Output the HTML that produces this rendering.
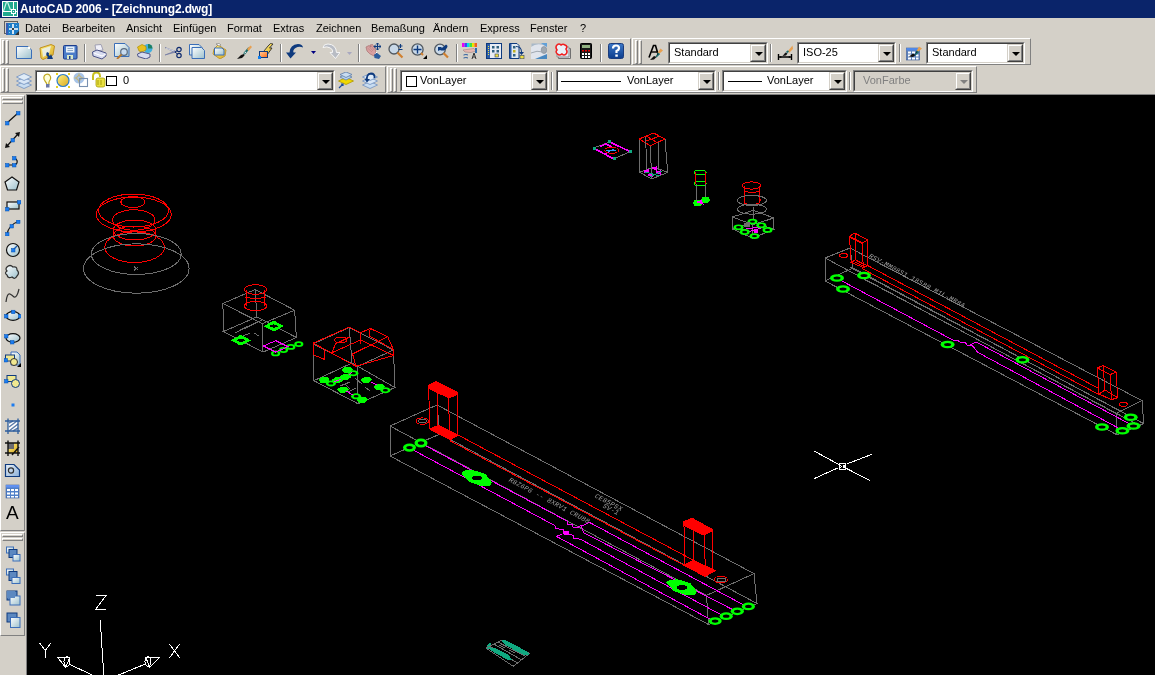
<!DOCTYPE html><html><head><meta charset="utf-8"><style>
*{margin:0;padding:0;box-sizing:border-box}
html,body{width:1155px;height:675px;overflow:hidden;background:#D4D0C8;font-family:"Liberation Sans",sans-serif;font-size:11px;color:#000;position:relative}
div,svg{position:absolute}
.t{white-space:nowrap;line-height:13px;-webkit-font-smoothing:antialiased;will-change:transform}
.tb{background:#D4D0C8;border-top:1px solid #fff;border-left:1px solid #fff;border-right:1px solid #808080;border-bottom:1px solid #808080}
.g{width:3px;border-left:1px solid #fff;border-top:1px solid #fff;border-right:1px solid #808080;border-bottom:1px solid #808080}
.hg{height:3px;border-left:1px solid #fff;border-top:1px solid #fff;border-right:1px solid #808080;border-bottom:1px solid #808080}
.sp{width:2px;height:18px;border-left:1px solid #808080;border-right:1px solid #fff}
.hsp{height:2px;width:18px;border-top:1px solid #808080;border-bottom:1px solid #fff}
.cb{background:#fff;border-top:1px solid #808080;border-left:1px solid #808080;border-right:1px solid #fff;border-bottom:1px solid #fff;height:22px}
.cb>.in{left:0;top:0;right:0;bottom:0;border-top:1px solid #404040;border-left:1px solid #404040;border-right:1px solid #D4D0C8;border-bottom:1px solid #D4D0C8}
.dd{top:1px;right:1px;width:16px;height:18px;background:#D4D0C8;border-top:1px solid #D4D0C8;border-left:1px solid #D4D0C8;border-right:1px solid #404040;border-bottom:1px solid #404040}
.dd>.i{left:0;top:0;right:0;bottom:0;border-top:1px solid #fff;border-left:1px solid #fff;border-right:1px solid #808080;border-bottom:1px solid #808080}
.dd>.i:after{content:"";position:absolute;left:3px;top:6px;border-left:4px solid transparent;border-right:4px solid transparent;border-top:4px solid #000}
.dis .dd>.i:after{border-top-color:#808080}
.ct{top:3px}
</style></head><body>
<div style="left:0;top:0;width:1155px;height:18px;background:#0A246A"></div>
<svg style="left:2px;top:1px" width="16" height="16" viewBox="0 0 16 16">
<rect x="0" y="0" width="16" height="16" fill="#fff"/>
<rect x="1" y="1" width="14" height="14" fill="#21A98F"/>
<path d="M1.5 10 L4.5 1 M5.5 1 L8.5 9" stroke="#C8F0E8" stroke-width="1.2" fill="none"/>
<path d="M1 10.5 H15 M11.5 1 V15" stroke="#fff" stroke-width="1"/>
<rect x="9.5" y="8.5" width="4" height="4" fill="#21A98F" stroke="#fff"/>
<rect x="11" y="10" width="1" height="1" fill="#fff"/>
</svg>
<div class="t" style="left:20px;top:3px;color:#fff;font-weight:bold;font-size:12px;letter-spacing:-0.15px">AutoCAD 2006 - [Zeichnung2.dwg]</div>
<svg style="left:3px;top:20px" width="18" height="16" viewBox="0 0 18 16">
<rect x="1.5" y="1.5" width="13" height="12" fill="#D4D0C8" stroke="#606060"/>
<rect x="3" y="3" width="13" height="12" fill="#1E7DC8"/>
<rect x="3" y="3" width="2" height="12" fill="#3A5EB0"/>
<path d="M10 4 V14 M6 9 H15" stroke="#fff" stroke-width="1.6"/>
<circle cx="10" cy="9" r="1" fill="#000"/><g fill="#8CC8F0"><rect x="6" y="5" width="1" height="1"/><rect x="13" y="5" width="1" height="1"/><rect x="6" y="12" width="1" height="1"/></g>
<path d="M14 13 L16 11 L16 15 L12 15Z" fill="#303030"/>
</svg>
<div class="t" style="left:25px;top:22px">Datei</div>
<div class="t" style="left:62px;top:22px">Bearbeiten</div>
<div class="t" style="left:126px;top:22px">Ansicht</div>
<div class="t" style="left:173px;top:22px">Einfügen</div>
<div class="t" style="left:227px;top:22px">Format</div>
<div class="t" style="left:273px;top:22px">Extras</div>
<div class="t" style="left:316px;top:22px">Zeichnen</div>
<div class="t" style="left:371px;top:22px">Bemaßung</div>
<div class="t" style="left:433px;top:22px">Ändern</div>
<div class="t" style="left:480px;top:22px">Express</div>
<div class="t" style="left:530px;top:22px">Fenster</div>
<div class="t" style="left:580px;top:22px">?</div>
<div class="tb" style="left:0px;top:38px;width:631px;height:27px"></div>
<div class="g" style="left:2px;top:40px;height:24px"></div>
<div class="g" style="left:6px;top:40px;height:24px"></div>
<div class="tb" style="left:632px;top:38px;width:399px;height:27px"></div>
<div class="g" style="left:635px;top:40px;height:24px"></div>
<div class="g" style="left:639px;top:40px;height:24px"></div>
<div class="tb" style="left:0px;top:66px;width:386px;height:27px"></div>
<div class="g" style="left:2px;top:68px;height:24px"></div>
<div class="g" style="left:6px;top:68px;height:24px"></div>
<div class="tb" style="left:387px;top:66px;width:590px;height:27px"></div>
<div class="g" style="left:390px;top:68px;height:24px"></div>
<div class="g" style="left:394px;top:68px;height:24px"></div>
<div class="sp" style="left:84px;top:44px"></div>
<div class="sp" style="left:159px;top:44px"></div>
<div class="sp" style="left:280px;top:44px"></div>
<div class="sp" style="left:358px;top:44px"></div>
<div class="sp" style="left:456px;top:44px"></div>
<div class="sp" style="left:600px;top:44px"></div>
<div class="sp" style="left:770px;top:44px"></div>
<div class="sp" style="left:899px;top:44px"></div>
<div class="sp" style="left:551px;top:72px"></div>
<div class="sp" style="left:718px;top:72px"></div>
<div class="sp" style="left:849px;top:72px"></div>
<div class="cb" style="left:668px;top:42px;width:100px;background:#fff"><div class="in"></div><div class="t ct" style="left:5px">Standard</div><div class="dd"><div class="i"></div></div></div>
<div class="cb" style="left:797px;top:42px;width:99px;background:#fff"><div class="in"></div><div class="t ct" style="left:5px">ISO-25</div><div class="dd"><div class="i"></div></div></div>
<div class="cb" style="left:926px;top:42px;width:99px;background:#fff"><div class="in"></div><div class="t ct" style="left:5px">Standard</div><div class="dd"><div class="i"></div></div></div>
<div class="cb" style="left:35px;top:70px;width:300px;background:#fff"><div class="in"></div><div class="t ct" style="left:87px">0</div><div class="dd"><div class="i"></div></div></div>
<div class="cb" style="left:400px;top:70px;width:149px;background:#fff"><div class="in"></div><div style="left:5px;top:5px;width:11px;height:11px;border:1px solid #000;background:#fff"></div><div class="t ct" style="left:19px">VonLayer</div><div class="dd"><div class="i"></div></div></div>
<div class="cb" style="left:556px;top:70px;width:160px;background:#fff"><div class="in"></div><div style="left:4px;top:10px;width:60px;height:1px;background:#000"></div><div class="t ct" style="left:70px">VonLayer</div><div class="dd"><div class="i"></div></div></div>
<div class="cb" style="left:722px;top:70px;width:125px;background:#fff"><div class="in"></div><div style="left:5px;top:10px;width:34px;height:1px;background:#000"></div><div class="t ct" style="left:44px">VonLayer</div><div class="dd"><div class="i"></div></div></div>
<div class="cb dis" style="left:853px;top:70px;width:120px;background:#D4D0C8"><div class="in"></div><div class="t ct" style="left:9px;color:#808080">VonFarbe</div><div class="dd"><div class="i"></div></div></div>
<div class="tb" style="left:0;top:95px;width:25px;height:436px"></div>
<div class="hg" style="left:2px;top:97px;width:21px"></div><div class="hg" style="left:2px;top:101px;width:21px"></div>
<div class="tb" style="left:0;top:532px;width:25px;height:104px"></div>
<div class="hg" style="left:2px;top:534px;width:21px"></div><div class="hg" style="left:2px;top:538px;width:21px"></div>
<div style="left:26px;top:94px;width:1129px;height:581px;background:#000;border-top:1px solid #808080;border-left:1px solid #808080"></div>
<svg style="left:0;top:0" width="0" height="0"><defs>
<linearGradient id="gp" x1="0" y1="0" x2="1" y2="1"><stop offset="0" stop-color="#FFFFFF"/><stop offset="1" stop-color="#9CC0CC"/></linearGradient>
<linearGradient id="gy" x1="0" y1="0" x2="1" y2="1"><stop offset="0" stop-color="#FFF080"/><stop offset="1" stop-color="#D8A820"/></linearGradient>
<linearGradient id="go" x1="0" y1="0" x2="1" y2="1"><stop offset="0" stop-color="#FFD0A0"/><stop offset="1" stop-color="#FF6A10"/></linearGradient>
<linearGradient id="gb" x1="0" y1="0" x2="1" y2="1"><stop offset="0" stop-color="#E8F0F8"/><stop offset="1" stop-color="#8CB0D8"/></linearGradient>
<linearGradient id="gh" x1="0" y1="0" x2="0" y2="1"><stop offset="0" stop-color="#3C78C8"/><stop offset="1" stop-color="#0C3C8C"/></linearGradient>
</defs></svg>
<svg style="left:16px;top:44px" width="16" height="16" viewBox="0 0 16 16"><path d="M0.5 2.5 H12 L15.5 6 V14.5 H0.5Z" fill="url(#gp)" stroke="#3A6EB8"/><rect x="12" y="3" width="2" height="2" fill="#fff"/></svg>
<svg style="left:39px;top:44px" width="16" height="16" viewBox="0 0 16 16"><path d="M1 4 L12 0.5 L15.5 2 L14 11 L4 15.5 L2 14Z" fill="url(#gy)" stroke="#C09020"/><path d="M3 5 L12 2 L10 10 L4 13Z" fill="#E8F4FF" opacity="0.8"/><path d="M8 8 Q6 11 9 13 L8 15 L14 15 L12 10 L11 12 Q9 11 10 9Z" fill="#0E3A7E"/></svg>
<svg style="left:63px;top:45px" width="16" height="16" viewBox="0 0 16 16"><rect x="0.5" y="0.5" width="13.5" height="13.5" rx="1" fill="#4C7CC8" stroke="#1C3C8C"/><rect x="3" y="1.5" width="8.5" height="6" fill="#E8F0F8"/><path d="M4.5 3.5 H10 M4.5 5.5 H10" stroke="#8CA8C8"/><rect x="4" y="10" width="6" height="4" fill="#D8E8C8"/><rect x="6" y="11" width="1.5" height="3" fill="#1C3C8C"/></svg>
<svg style="left:92px;top:44px" width="16" height="16" viewBox="0 0 16 16"><path d="M3 1 L9 0.5 L11 6 L4 7Z" fill="#F0F0F8" stroke="#9090A8" stroke-width="0.8"/><path d="M0.5 8 L5 6 L14 9 L14 12 L10 15 L1 12Z" fill="#D8DCF0" stroke="#4C5488"/><path d="M2 9 L10 12 L14 10" stroke="#fff" fill="none"/></svg>
<svg style="left:114px;top:43px" width="16" height="16" viewBox="0 0 16 16"><path d="M0.5 0.5 H11 L15 4.5 V13.5 H0.5Z" fill="url(#gp)" stroke="#3A6EB8"/><circle cx="10" cy="9" r="3.3" fill="#C8DCF0" stroke="#5C6C80" stroke-width="1.2"/><path d="M7.5 11.5 L3 16" stroke="#B8782C" stroke-width="1.8"/></svg>
<svg style="left:137px;top:43px" width="16" height="16" viewBox="0 0 16 16"><circle cx="11" cy="5.5" r="4.5" fill="#40B0E0"/><path d="M11 1 A4.5 4.5 0 0 1 15.5 5.5 L11 5.5Z" fill="#208060"/><path d="M0.5 4 L5 1.5 L9 3.5 L9 7 L5 9 L2 8Z" fill="#E8C020" stroke="#B09000" stroke-width="0.7"/><path d="M0.5 11 L5 9 L13 11 L13 14 L9 16 L1 13.5Z" fill="#D8DCF0" stroke="#4C5488"/></svg>
<svg style="left:165px;top:46px" width="17" height="13" viewBox="0 0 17 13"><path d="M0 1.5 L11 5.5 L10 6.5Z" fill="#A0A8C8" stroke="#6C74A0" stroke-width="0.6"/><path d="M0 9 L11 6 L10 5Z" fill="#8890B8" stroke="#6C74A0" stroke-width="0.6"/><path d="M1 2.2 L9 5" stroke="#fff" stroke-width="0.6"/><circle cx="14" cy="3.5" r="2.2" fill="none" stroke="#0E2A6E" stroke-width="1.2"/><circle cx="14" cy="9.5" r="2.2" fill="none" stroke="#0E2A6E" stroke-width="1.2"/><path d="M10 6 L12.5 4.5 M10 6 L12.5 8" stroke="#0E2A6E"/></svg>
<svg style="left:189px;top:44px" width="16" height="16" viewBox="0 0 16 16"><path d="M0.5 0.5 H10 L13 3.5 V11 H0.5Z" fill="url(#gp)" stroke="#3A6EB8"/><path d="M3 3.5 H12.5 L15.5 6.5 V14.5 H3Z" fill="url(#gp)" stroke="#3A6EB8"/></svg>
<svg style="left:212px;top:43px" width="16" height="16" viewBox="0 0 16 16"><path d="M2 6 L6 2 L14 7 L13 13 L8 16 L1 11Z" fill="url(#gy)" stroke="#C09830"/><path d="M4 1 L7 0.5 L9 2 L7 3 Z" fill="#fff" stroke="#707070" stroke-width="0.6"/><path d="M2.5 5 H10 L12 7 V12 H2.5Z" fill="url(#gp)" stroke="#3A6EB8"/></svg>
<svg style="left:236px;top:45px" width="16" height="16" viewBox="0 0 16 16"><path d="M8 9 L13 3" stroke="#1C6C6C" stroke-width="2"/><path d="M11 4 L14.5 0.5 L16 2 L12.5 6Z" fill="#E8A050"/><path d="M1 14 L5 10 L8 9 L8.5 10.5 L6 13Z" fill="#101010"/><path d="M8.5 8 L10 7" stroke="#fff"/></svg>
<svg style="left:258px;top:43px" width="16" height="16" viewBox="0 0 16 16"><path d="M6 8 L10 3 L12.5 0.5 L15 1 L11.5 5 L14 5 L9 12" fill="url(#gy)" stroke="#202020" stroke-width="0.8"/><rect x="1.5" y="8.5" width="8" height="6" fill="url(#go)" stroke="#0E3A7E"/><rect x="0" y="13" width="3" height="3" fill="#1080F0"/></svg>
<svg style="left:286px;top:43px" width="18" height="16" viewBox="0 0 18 16"><path d="M4.5 15.5 L0 9.5 L3.5 9.5 Q4 1.5 12 1 Q16.5 1 17 4.5 Q13 3 9.5 5 Q6.5 7 7.5 9.5 L10 9.5Z" fill="#0E3A7E"/></svg>
<svg style="left:311px;top:51px" width="5" height="3" viewBox="0 0 5 3"><path d="M0 0 H5 L2.5 3Z" fill="#000080"/></svg>
<svg style="left:322px;top:43px" width="18" height="16" viewBox="0 0 18 16"><path d="M13.5 15.5 L18 9.5 L14.5 9.5 Q14 1.5 6 1 Q1.5 1 1 4.5 Q5 3 8.5 5 Q11.5 7 10.5 9.5 L8 9.5Z" fill="#B8BCC4" stroke="#fff" stroke-width="0.8"/></svg>
<svg style="left:347px;top:52px" width="5" height="3" viewBox="0 0 5 3"><path d="M0 0 H5 L2.5 3Z" fill="#A8A8C0"/></svg>
<svg style="left:365px;top:43px" width="16" height="16" viewBox="0 0 16 16"><path d="M1 4 L4 2.5 L6 4 L5 2 L7.5 1.5 L10 5 L11 10 L9 13 Q4 11 2 8Z" fill="#D8A0A0" stroke="#A87070" stroke-width="0.7"/><path d="M2.5 5 L7 9 M4 3.5 L8 8 M6 2.5 L9 7" stroke="#B88080" stroke-width="0.6"/><path d="M9 12 L11.5 9.5 L16 13 L14 16 L9.5 15Z" fill="#2C5C9C"/><path d="M10.5 10.5 L12 9" stroke="#fff"/><path d="M12.5 0 V7 M9 3.5 H16" stroke="#0E3A7E" stroke-width="1.2"/><path d="M11 1.5 L12.5 0 L14 1.5 M11 5.5 L12.5 7 L14 5.5 M10.5 2 L9 3.5 L10.5 5 M14.5 2 L16 3.5 L14.5 5" stroke="#0E3A7E" fill="none"/></svg>
<svg style="left:388px;top:43px" width="16" height="16" viewBox="0 0 16 16"><circle cx="6" cy="6" r="5" fill="#C8D8E8" stroke="#505860" stroke-width="1.3"/><path d="M9.5 9.5 L14.5 14.5" stroke="#D08030" stroke-width="2.2"/><path d="M12.5 1 V5 M10.5 3 H14.5 M10.5 6.5 H14.5" stroke="#0E3A7E" stroke-width="1.1"/></svg>
<svg style="left:411px;top:43px" width="16" height="16" viewBox="0 0 16 16"><circle cx="6.5" cy="6.5" r="5.6" fill="#C8D8E8" stroke="#505860" stroke-width="1.3"/><path d="M6.5 2.5 V10.5 M2.5 6.5 H10.5" stroke="#0E3A7E" stroke-width="1.4"/><path d="M10 10 L12 12" stroke="#D08030" stroke-width="2"/><path d="M16 12 V16 H12Z" fill="#000"/></svg>
<svg style="left:434px;top:43px" width="16" height="16" viewBox="0 0 16 16"><circle cx="6" cy="6.5" r="5.3" fill="#C8D8E8" stroke="#505860" stroke-width="1.3"/><path d="M9.5 10 L14 14.5" stroke="#D08030" stroke-width="2.2"/><path d="M4 8 L4 4 L8 4 L6.5 5.5 Q10 4 12 1.5 Q15.5 3 11 7 Q8.5 8 6 7Z" fill="#0E3A7E"/></svg>
<svg style="left:462px;top:43px" width="16" height="16" viewBox="0 0 16 16"><rect x="0" y="0" width="14" height="4" fill="url(#rb)"/><rect x="0" y="0" width="2.5" height="4" fill="#F000F0"/><rect x="2.5" y="0" width="2.5" height="4" fill="#4040FF"/><rect x="5" y="0" width="2.5" height="4" fill="#00E0E0"/><rect x="7.5" y="0" width="2.5" height="4" fill="#40E040"/><rect x="10" y="0" width="2.5" height="4" fill="#F0E000"/><rect x="12.5" y="0" width="2.5" height="4" fill="#F06020"/><path d="M1 7 L12 5.5 L14 8 L9 9.5 L3 9Z" fill="#E8B8B0" stroke="#A08080" stroke-width="0.6"/><path d="M1.5 12 Q4 11 6 12 M1.5 15 Q4 14 6 15" stroke="#2C5C9C" fill="none"/><path d="M10 16 L12 10 L14 16 M11 14 H13" stroke="#303030" fill="none"/><rect x="13" y="5" width="2" height="5" fill="#2C6CB0"/></svg>
<svg style="left:486px;top:43px" width="16" height="16" viewBox="0 0 16 16"><rect x="0.5" y="0.5" width="15" height="15" fill="#E8ECF4" stroke="#0E3A7E"/><rect x="1" y="1" width="3" height="14" fill="#2C5CA8"/><path d="M2.5 3 V13" stroke="#F0E040" stroke-dasharray="1 1"/><rect x="6" y="3" width="2.5" height="2.5" fill="#306080"/><rect x="10.5" y="3" width="2.5" height="2.5" fill="#306080"/><rect x="6" y="7" width="2.5" height="2.5" fill="#306080"/><rect x="10.5" y="7" width="2.5" height="2.5" fill="#306080"/><rect x="9" y="11" width="3.5" height="3" fill="#F0E040" stroke="#304060" stroke-width="0.6"/></svg>
<svg style="left:509px;top:43px" width="16" height="16" viewBox="0 0 16 16"><path d="M0.5 0.5 H8 L10 2.5 V15.5 H0.5Z" fill="#E0E8F0" stroke="#0E3A7E"/><rect x="1" y="1" width="1.5" height="14" fill="#2C5CA8"/><rect x="4" y="3" width="2.5" height="2.5" fill="#306080"/><rect x="4" y="7" width="2.5" height="2.5" fill="#C0B020"/><rect x="4" y="11" width="2.5" height="2.5" fill="#306080"/><path d="M7 3 Q13 3 13 9 L15 9 L12.5 12 L10 9 L12 9 Q12 4 7 4" fill="#0E3A7E"/><rect x="11" y="12.5" width="4" height="3.3" fill="#F0E040" stroke="#304060" stroke-width="0.6"/></svg>
<svg style="left:531px;top:43px" width="16" height="16" viewBox="0 0 16 16"><rect x="0.5" y="0.5" width="15.5" height="15" fill="#A8B8C8"/><path d="M0 4 Q5 0 12 2 L16 4 V13 L10 16 H0Z" fill="#E0E4EC"/><ellipse cx="13" cy="7" rx="2.8" ry="3.5" fill="#A0A8B0" stroke="#808890" stroke-width="0.6"/><path d="M0 10 Q6 7 12 9" stroke="#A0A8B0" fill="none"/><path d="M4 16 L16 11 V16Z" fill="#4888C0"/><path d="M10 0 H16 V4Z" fill="#60A0D8"/></svg>
<svg style="left:555px;top:43px" width="16" height="16" viewBox="0 0 16 16"><path d="M3.5 5.5 H15.5 V15.5 H3.5Z" fill="#D8DCE8" stroke="#707070"/><path d="M2 4 H14 V14 H2Z" fill="#E0E8F4" stroke="#909090"/><path d="M2 2 Q4 0 6 2 Q8 0.5 10 2 Q13 3 11 6 Q13 9 11 11 Q9 13 7 11 Q4 13 2.5 11 Q0 9 2 7 Q0 4 2 2Z" fill="#E8F0F8" stroke="#F02020" stroke-width="1.6"/></svg>
<svg style="left:580px;top:43px" width="16" height="16" viewBox="0 0 16 16"><rect x="0.5" y="0.5" width="11" height="15" rx="0.8" fill="#181818" stroke="#000"/><rect x="2" y="2" width="8" height="3" fill="#90B080"/><g fill="#E00000"><rect x="2" y="7" width="2" height="1.5"/><rect x="5" y="7" width="2" height="1.5"/><rect x="8" y="7" width="2" height="1.5"/></g><g fill="#fff"><rect x="2" y="10" width="2" height="2"/><rect x="5" y="10" width="2" height="2"/><rect x="8" y="10" width="2" height="2"/><rect x="2" y="13" width="2" height="2"/><rect x="5" y="13" width="2" height="2"/><rect x="8" y="13" width="2" height="2"/></g></svg>
<svg style="left:608px;top:43px" width="16" height="16" viewBox="0 0 16 16"><rect x="0.5" y="0.5" width="15" height="15" rx="2" fill="url(#gh)" stroke="#1C3C7C"/><path d="M5 5.5 Q5 2.5 8 2.5 Q11 2.5 11 5 Q11 7 8.5 8 V10" stroke="#fff" stroke-width="2.2" fill="none"/><rect x="7.3" y="11.5" width="2.5" height="2.2" fill="#fff"/></svg>
<svg style="left:648px;top:44px" width="16" height="16" viewBox="0 0 16 16"><path d="M1 13.5 L5.5 1.5 L7.5 1.5 L10 10" stroke="#000" stroke-width="1.6" fill="none"/><path d="M3.5 8 H9" stroke="#000" stroke-width="1.4"/><path d="M12.5 4.5 L15 6.5 L11 10 L9.5 9Z" fill="#E8A050"/><path d="M9.5 9 L11 10 L8 13" stroke="#1C6C6C" stroke-width="1.5"/><path d="M2 16 L6 12 L8.5 13 L6 15.5Z" fill="#101010"/></svg>
<svg style="left:777px;top:45px" width="16" height="16" viewBox="0 0 16 16"><path d="M1.5 9 V15 M14.5 9 V15 M1.5 12 H14.5" stroke="#000" stroke-width="1.4"/><path d="M3 11 L5 12 L3 13Z M13 11 L11 12 L13 13Z" fill="#000"/><path d="M11 6 L15.5 0.5 L16 4 L12 8Z" fill="#E8A050"/><path d="M9.5 7.5 L11.5 6" stroke="#1C6C6C" stroke-width="1.6"/><path d="M5.5 11 L8.5 7.5 L10.5 8.5 L9 10.5Z" fill="#101010"/></svg>
<svg style="left:906px;top:45px" width="16" height="16" viewBox="0 0 16 16"><rect x="0.5" y="3" width="13" height="12" fill="#5C80B8" stroke="#3C5C98" stroke-width="0.6"/><rect x="0.5" y="3" width="12" height="2.5" fill="#5088E8"/><g fill="#fff"><rect x="2" y="6.5" width="3" height="2"/><rect x="6" y="6.5" width="3" height="2"/><rect x="2" y="9.5" width="3" height="2"/><rect x="2" y="12.5" width="3" height="2"/><rect x="6" y="12.5" width="3" height="2"/><rect x="10" y="12.5" width="2.5" height="2"/><rect x="10" y="9.5" width="2.5" height="2"/></g><path d="M13 1.5 L16 3.5 L12 7 L10.5 6Z" fill="#E8A050"/><path d="M10.5 6 L12 7 L9 10" stroke="#1C6C6C" stroke-width="1.5"/><path d="M3 11.5 L7 8.5 L9.5 10 L7 12Z" fill="#101010"/></svg>
<svg style="left:16px;top:72px" width="16" height="17" viewBox="0 0 16 17"><path d="M0.5 13 L8 9.5 L15.5 13 L8 16.5Z" fill="#C8DCF0" stroke="#7090C0" stroke-width="0.8"/><path d="M0.5 9 L8 5.5 L15.5 9 L8 12.5Z" fill="#D8E6F6" stroke="#7090C0" stroke-width="0.8"/><path d="M0.5 5 L8 1.5 L15.5 5 L8 8.5Z" fill="#E0ECF8" stroke="#7090C0" stroke-width="0.8"/></svg>
<svg style="left:42px;top:73px" width="10" height="16" viewBox="0 0 10 16"><path d="M5 13 Q5 10 3 8 Q1 5 2.5 2.5 Q5 0 7.5 2 Q9.5 4.5 8 7 Q6.5 9 7 11Z" fill="#FFFFD8" stroke="#C0A820" stroke-width="1.2"/><rect x="4" y="11" width="3.5" height="3.5" fill="#6C78A8"/></svg>
<svg style="left:56px;top:73px" width="15" height="16" viewBox="0 0 15 16"><circle cx="7" cy="7.5" r="6" fill="url(#gy)" stroke="#2C7CC8" stroke-width="1.2"/><g fill="#E8D020"><rect x="0" y="0" width="2" height="2"/><rect x="12" y="0" width="2" height="2"/><rect x="0" y="13" width="2" height="2"/><rect x="12" y="13" width="2" height="2"/></g></svg>
<svg style="left:73px;top:72px" width="16" height="16" viewBox="0 0 16 16"><circle cx="6" cy="6" r="5.5" fill="#A8C4E8"/><circle cx="6" cy="6" r="2.3" fill="none" stroke="#C8B060" stroke-width="1"/><path d="M6 1.5 V3.5 M6 8.5 V10.5 M1.5 6 H3.5 M8.5 6 H10.5" stroke="#C8B060"/><rect x="6.5" y="6.5" width="8" height="8" fill="none" stroke="#7890B0" stroke-width="1.1"/></svg>
<svg style="left:91px;top:72px" width="15" height="16" viewBox="0 0 15 16"><path d="M2 8 V4 Q2 0.5 5.5 0.5 Q9 0.5 9 4 V5" stroke="#C8C020" stroke-width="2" fill="none"/><rect x="5" y="6" width="9" height="9" rx="2" fill="#E8E040" stroke="#A8A010" stroke-width="0.8"/><path d="M7 8 V13 M10 8 V13" stroke="#A8A010"/></svg>
<svg style="left:106px;top:76px" width="11" height="10" viewBox="0 0 11 10"><rect x="0.5" y="0.5" width="10" height="9" fill="#fff" stroke="#000"/></svg>
<svg style="left:338px;top:72px" width="16" height="17" viewBox="0 0 16 17"><path d="M0.5 9 L8 5.5 L15.5 9 L8 12.5Z" fill="#F0D800" stroke="#B09800" stroke-width="0.8"/><path d="M2 5 L8 2 L14 5 L8 8Z" fill="#B8D4F0" stroke="#5C7CA8" stroke-width="0.8"/><path d="M2 2.5 L8 0 L14 2.5 L8 5.5Z" fill="#C8DCF0" stroke="#5C7CA8" stroke-width="0.8"/><path d="M1 16 L5 12 M3 12 H5 V14" stroke="#1C4C9C" stroke-width="1.2" fill="none"/></svg>
<svg style="left:362px;top:72px" width="16" height="17" viewBox="0 0 16 17"><path d="M0.5 13 L8 9.5 L15.5 13 L8 16.5Z" fill="#C8DCF0" stroke="#7090C0" stroke-width="0.8"/><path d="M0.5 9 L8 5.5 L15.5 9 L8 12.5Z" fill="#D8E6F6" stroke="#7090C0" stroke-width="0.8"/><path d="M0.5 5 L8 1.5 L15.5 5 L8 8.5Z" fill="#E0ECF8" stroke="#7090C0" stroke-width="0.8"/><path d="M5 9 Q4 2 9 1.5 Q13 1.5 12.5 6" stroke="#0E3A7E" stroke-width="1.8" fill="none"/><path d="M2.5 7 L5 10.5 L8 7Z" fill="#0E3A7E"/></svg>
<svg style="left:4px;top:110px" width="17" height="16" viewBox="0 0 17 16"><path d="M3 13 L14 3" stroke="#101010" stroke-width="1.2"/><rect x="1.5" y="11.5" width="3.5" height="3.5" fill="#1C7CF0" stroke="#0050B0" stroke-width="0.5"/><rect x="12.5" y="1.5" width="3.5" height="3.5" fill="#1C7CF0" stroke="#0050B0" stroke-width="0.5"/></svg>
<svg style="left:4px;top:132px" width="17" height="16" viewBox="0 0 17 16"><path d="M3 14 L14 2" stroke="#101010" stroke-width="1.2"/><path d="M1 16 L2 11 L6 15Z M16 0 L11 1 L15 5Z" fill="#101010"/><rect x="7.0" y="6.5" width="3.5" height="3.5" fill="#1C7CF0" stroke="#0050B0" stroke-width="0.5"/></svg>
<svg style="left:4px;top:155px" width="17" height="16" viewBox="0 0 17 16"><path d="M3 10 H10 Q14 9 13 5.5 Q12 3 10 3" stroke="#101010" stroke-width="1.2" fill="none"/><rect x="1.5" y="8.5" width="3.5" height="3.5" fill="#1C7CF0" stroke="#0050B0" stroke-width="0.5"/><rect x="8.5" y="8.5" width="3.5" height="3.5" fill="#1C7CF0" stroke="#0050B0" stroke-width="0.5"/><rect x="8.5" y="1.5" width="3.5" height="3.5" fill="#1C7CF0" stroke="#0050B0" stroke-width="0.5"/></svg>
<svg style="left:4px;top:176px" width="17" height="16" viewBox="0 0 17 16"><path d="M8 1 L15 6 L12.5 14 H3.5 L1 6Z" fill="url(#gp)" stroke="#101010" stroke-width="1.2"/></svg>
<svg style="left:4px;top:200px" width="17" height="16" viewBox="0 0 17 16"><rect x="3" y="2" width="12" height="7" fill="url(#gp)" stroke="#101010" stroke-width="1.2"/><rect x="1.5" y="7.5" width="3.5" height="3.5" fill="#1C7CF0" stroke="#0050B0" stroke-width="0.5"/><rect x="13.5" y="0.5" width="3.5" height="3.5" fill="#1C7CF0" stroke="#0050B0" stroke-width="0.5"/></svg>
<svg style="left:4px;top:220px" width="17" height="16" viewBox="0 0 17 16"><path d="M3 14 Q5 5 14 1.5" stroke="#202020" stroke-width="1.2" fill="none"/><rect x="1.5" y="12.5" width="3.5" height="3.5" fill="#1C7CF0" stroke="#0050B0" stroke-width="0.5"/><rect x="6.0" y="4.5" width="3.5" height="3.5" fill="#1C7CF0" stroke="#0050B0" stroke-width="0.5"/><rect x="12.5" y="0.0" width="3.5" height="3.5" fill="#1C7CF0" stroke="#0050B0" stroke-width="0.5"/></svg>
<svg style="left:4px;top:242px" width="17" height="16" viewBox="0 0 17 16"><circle cx="9" cy="8" r="6.5" fill="url(#gp)" stroke="#101010" stroke-width="1.2"/><path d="M9 8 L13 4" stroke="#1C5CB0" stroke-width="1.2"/><rect x="7.5" y="6.5" width="3.5" height="3.5" fill="#1C7CF0" stroke="#0050B0" stroke-width="0.5"/></svg>
<svg style="left:4px;top:264px" width="17" height="16" viewBox="0 0 17 16"><path d="M3 3 Q6 0 9 3 Q13 2 13 6 Q16 9 13 12 Q11 16 8 13 Q4 15 3 11 Q0 9 3 7 Q1 5 3 3Z" fill="url(#gp)" stroke="#303030" stroke-width="1.2"/></svg>
<svg style="left:4px;top:288px" width="17" height="16" viewBox="0 0 17 16"><path d="M2 14 Q3 5 6 6 Q8 7 10 9 Q13 10 15 1" stroke="#303030" stroke-width="1.2" fill="none"/></svg>
<svg style="left:4px;top:308px" width="17" height="16" viewBox="0 0 17 16"><ellipse cx="9" cy="8" rx="7" ry="4.3" fill="url(#gp)" stroke="#101010" stroke-width="1.2"/><rect x="0.5" y="6.5" width="3.5" height="3.5" fill="#1C7CF0" stroke="#0050B0" stroke-width="0.5"/><rect x="14.5" y="6.5" width="3.5" height="3.5" fill="#1C7CF0" stroke="#0050B0" stroke-width="0.5"/><rect x="7.5" y="2.2" width="3.5" height="3.5" fill="#1C7CF0" stroke="#0050B0" stroke-width="0.5"/></svg>
<svg style="left:4px;top:330px" width="17" height="16" viewBox="0 0 17 16"><ellipse cx="9" cy="8" rx="7" ry="4.3" fill="url(#gp)" stroke="#101010" stroke-width="1.2"/><rect x="0.5" y="4.5" width="3.5" height="3.5" fill="#1C7CF0" stroke="#0050B0" stroke-width="0.5"/><rect x="6.5" y="10.5" width="3.5" height="3.5" fill="#1C7CF0" stroke="#0050B0" stroke-width="0.5"/></svg>
<svg style="left:4px;top:351px" width="17" height="16" viewBox="0 0 17 16"><path d="M7 1 H13 L16 4 V14 H7Z" fill="url(#gp)" stroke="#3C6EB8"/><rect x="1.5" y="4" width="9" height="6" fill="#F0E890" stroke="#0E3A7E"/><circle cx="10" cy="11" r="3.5" fill="#F0E890" stroke="#303030"/><path d="M17 12 V16 H13Z" fill="#000"/><rect x="0.0" y="7.5" width="3.5" height="3.5" fill="#1C7CF0" stroke="#0050B0" stroke-width="0.5"/></svg>
<svg style="left:4px;top:374px" width="17" height="16" viewBox="0 0 17 16"><rect x="3" y="1.5" width="9" height="6" fill="#F0E890" stroke="#0E3A7E"/><circle cx="11.5" cy="9.5" r="4" fill="#F0E890" stroke="#0E3A7E"/><rect x="0.5" y="5.5" width="3.5" height="3.5" fill="#1C7CF0" stroke="#0050B0" stroke-width="0.5"/></svg>
<svg style="left:4px;top:397px" width="17" height="16" viewBox="0 0 17 16"><rect x="7.5" y="6.5" width="3" height="3" fill="#1C7CF0"/></svg>
<svg style="left:4px;top:418px" width="17" height="16" viewBox="0 0 17 16"><path d="M4 3 H14 V13 H4Z" fill="#fff"/><path d="M5 5 L9 3 M5 9 L13 3 M5 13 L14 6 M9 13 L14 10" stroke="#5C7CA8" stroke-width="1.5"/><path d="M1 3 H16 M1 13 H16 M4 0.5 V16 M14 0.5 V16" stroke="#2C5C9C" stroke-width="1.3"/></svg>
<svg style="left:4px;top:440px" width="17" height="16" viewBox="0 0 17 16"><rect x="4" y="3" width="10" height="10" fill="url(#gy)"/><rect x="4" y="3" width="6" height="6" fill="#303C78" opacity="0.7"/><path d="M1 3 H16 M1 13 H16 M4 0.5 V16 M14 0.5 V16 M8 15 L15 7" stroke="#101010" stroke-width="1.4"/></svg>
<svg style="left:4px;top:463px" width="17" height="16" viewBox="0 0 17 16"><path d="M1.5 1.5 H10 L15.5 7 V13.5 H1.5Z" fill="url(#gb)" stroke="#0E3A7E" stroke-width="1.2"/><circle cx="7" cy="7.5" r="2.6" fill="none" stroke="#303030" stroke-width="1.2"/></svg>
<svg style="left:4px;top:484px" width="17" height="16" viewBox="0 0 17 16"><rect x="2" y="1" width="13" height="13" fill="#5080C8" stroke="#3C60A0" stroke-width="0.6"/><rect x="2" y="1" width="13" height="2.5" fill="#6090F0"/><g fill="#fff"><rect x="3" y="5" width="3" height="2"/><rect x="7" y="5" width="3" height="2"/><rect x="11" y="5" width="3" height="2"/><rect x="3" y="8.5" width="3" height="2"/><rect x="7" y="8.5" width="3" height="2"/><rect x="11" y="8.5" width="3" height="2"/><rect x="3" y="12" width="3" height="1.5"/><rect x="7" y="12" width="3" height="1.5"/><rect x="11" y="12" width="3" height="1.5"/></g></svg>
<div class="t" style="left:6px;top:503px;font-size:19px;line-height:19px">A</div>
<svg style="left:4px;top:546px" width="17" height="16" viewBox="0 0 17 16"><rect x="2.5" y="1" width="7" height="6" fill="url(#gp)" stroke="#3C6EB8"/><rect x="5" y="3.5" width="8" height="8" fill="#5C88C0" stroke="#0E3A7E"/><rect x="9" y="8.5" width="7" height="6.5" fill="url(#gp)" stroke="#3C6EB8"/></svg>
<svg style="left:4px;top:568px" width="17" height="16" viewBox="0 0 17 16"><rect x="2.5" y="1" width="7" height="6" fill="url(#gp)" stroke="#3C6EB8"/><rect x="5" y="3.5" width="8" height="9" fill="#5C88C0" stroke="#0E3A7E"/><rect x="8" y="9.5" width="8" height="6" fill="url(#gp)" stroke="#3C6EB8"/></svg>
<svg style="left:4px;top:590px" width="17" height="16" viewBox="0 0 17 16"><rect x="3" y="1" width="10" height="9" fill="#5C88C0" stroke="#0E3A7E"/><rect x="6" y="6" width="10" height="9" fill="url(#gp)" stroke="#3C6EB8"/><rect x="3" y="1" width="8" height="7" fill="#5C88C0"/></svg>
<svg style="left:4px;top:612px" width="17" height="16" viewBox="0 0 17 16"><rect x="3" y="1" width="10" height="9" fill="#5C88C0" stroke="#0E3A7E"/><rect x="6.5" y="5.5" width="9.5" height="10" fill="url(#gp)" stroke="#3C6EB8"/></svg>
<svg width="1155" height="675" style="left:0;top:0" viewBox="0 0 1155 675" shape-rendering="crispEdges">
<defs><clipPath id="cv"><rect x="27" y="95" width="1128" height="580"/></clipPath></defs><g clip-path="url(#cv)">
<polygon points="390.0,426.0 437.0,405.0 754.0,573.6 706.5,595.4" fill="none" stroke="#6E6E6E" stroke-width="1"/>
<polygon points="390.0,456.0 440.0,434.0 757.0,603.5 708.5,624.5" fill="none" stroke="#6E6E6E" stroke-width="1"/>
<polyline points="390.0,426.0 390.0,456.0" fill="none" stroke="#6E6E6E" stroke-width="1"/>
<polyline points="437.0,405.0 440.0,434.0" fill="none" stroke="#6E6E6E" stroke-width="1"/>
<polyline points="754.0,573.6 757.0,603.5" fill="none" stroke="#6E6E6E" stroke-width="1"/>
<polyline points="706.5,595.4 708.5,624.5" fill="none" stroke="#6E6E6E" stroke-width="1"/>
<polyline points="458.0,435.0 712.0,570.1" fill="none" stroke="#FF0000" stroke-width="1"/>
<polyline points="450.0,440.7 705.0,576.4" fill="none" stroke="#FF0000" stroke-width="1"/>
<polyline points="426.0,446.0 567.0,521.0" fill="none" stroke="#FF00FF" stroke-width="1"/>
<polyline points="567.0,521.0 567.0,524.0 572.5,524.5 573.0,527.3 578.0,527.3 581.0,525.5 583.7,532.7 737.3,612.0" fill="none" stroke="#FF00FF" stroke-width="1"/>
<polyline points="414.0,450.5 555.0,525.6" fill="none" stroke="#FF00FF" stroke-width="1"/>
<polyline points="555.0,525.6 555.5,528.7 563.0,529.3 565.0,532.7 573.0,535.3 573.0,538.0 580.5,539.3 726.0,617.4" fill="none" stroke="#FF00FF" stroke-width="1"/>
<polyline points="581.0,526.7 589.3,522.3 748.0,607.3" fill="none" stroke="#FF00FF" stroke-width="1"/>
<polyline points="562.3,534.0 556.3,536.3 714.7,621.7" fill="none" stroke="#FF00FF" stroke-width="1"/>
<polygon points="563.0,531.0 568.0,531.0 569.0,534.0 564.0,534.0" fill="#FF00FF" stroke="#FF00FF" stroke-width="1"/>
<polygon points="428.0,385.5 436.0,381.5 457.0,392.0 457.0,394.5 449.0,398.0 428.0,388.0" fill="#FF0000" stroke="#FF0000" stroke-width="1"/>
<polyline points="428.5,386.0 430.0,429.0" fill="none" stroke="#FF0000" stroke-width="1"/>
<polyline points="437.0,392.0 438.0,425.0" fill="none" stroke="#FF0000" stroke-width="1"/>
<polyline points="448.5,396.0 449.5,430.0" fill="none" stroke="#FF0000" stroke-width="1"/>
<polyline points="457.0,393.0 458.0,435.0" fill="none" stroke="#FF0000" stroke-width="1"/>
<polygon points="429.5,428.9 438.8,425.3 458.0,435.1 450.2,439.8" fill="#FF0000" stroke="#FF0000" stroke-width="1"/>
<ellipse cx="422.3" cy="421.1" rx="6.3" ry="3.2" fill="none" stroke="#FF0000" stroke-width="1"/>
<ellipse cx="422.3" cy="421.1" rx="4.0" ry="1.8" fill="none" stroke="#6E6E6E" stroke-width="1"/>
<polygon points="683.2,522.0 692.0,518.2 711.6,529.0 711.6,531.0 703.4,535.0 683.2,525.0" fill="#FF0000" stroke="#FF0000" stroke-width="1"/>
<polyline points="683.9,522.6 685.0,564.8" fill="none" stroke="#FF0000" stroke-width="1"/>
<polyline points="693.3,527.7 694.0,560.4" fill="none" stroke="#FF0000" stroke-width="1"/>
<polyline points="704.0,532.0 705.3,566.7" fill="none" stroke="#FF0000" stroke-width="1"/>
<polyline points="712.2,529.0 713.0,569.0" fill="none" stroke="#FF0000" stroke-width="1"/>
<polygon points="685.0,564.8 693.3,560.4 715.3,570.5 705.3,576.2" fill="#FF0000" stroke="#FF0000" stroke-width="1"/>
<ellipse cx="720.9" cy="579.6" rx="6.5" ry="3.3" fill="none" stroke="#FF0000" stroke-width="1"/>
<rect x="717" y="578" width="8" height="3.5" fill="none" stroke="#6E6E6E"/>
<ellipse cx="409.5" cy="447.6" rx="6.5" ry="4.2" fill="#00FF00" shape-rendering="auto"/>
<ellipse cx="409.5" cy="447.6" rx="3.2" ry="1.7" fill="#000" shape-rendering="auto"/>
<ellipse cx="421.0" cy="443.0" rx="6.5" ry="4.5" fill="#00FF00" shape-rendering="auto"/>
<ellipse cx="421.0" cy="443.0" rx="3.2" ry="1.8" fill="#000" shape-rendering="auto"/>
<polygon points="462.0,473.2 465.0,470.9 473.0,470.6 485.0,474.2 491.3,482.2 489.6,485.2 480.7,485.2 469.0,481.2" fill="#00FF00" stroke="#00FF00" stroke-width="1"/>
<ellipse cx="477.0" cy="478.2" rx="5.0" ry="2.3" fill="#000" stroke="none" stroke-width="0"/>
<polygon points="667.0,582.5 670.0,580.2 678.0,579.9 690.0,583.5 696.3,591.5 694.6,594.5 685.7,594.5 674.0,590.5" fill="#00FF00" stroke="#00FF00" stroke-width="1"/>
<ellipse cx="682.0" cy="587.5" rx="5.0" ry="2.3" fill="#000" stroke="none" stroke-width="0"/>
<ellipse cx="715.1" cy="621.1" rx="6.6" ry="3.9" fill="#00FF00" shape-rendering="auto"/>
<ellipse cx="715.1" cy="621.1" rx="3.3" ry="1.6" fill="#000" shape-rendering="auto"/>
<ellipse cx="726.2" cy="616.2" rx="6.6" ry="3.9" fill="#00FF00" shape-rendering="auto"/>
<ellipse cx="726.2" cy="616.2" rx="3.3" ry="1.6" fill="#000" shape-rendering="auto"/>
<ellipse cx="737.3" cy="611.3" rx="6.6" ry="3.9" fill="#00FF00" shape-rendering="auto"/>
<ellipse cx="737.3" cy="611.3" rx="3.3" ry="1.6" fill="#000" shape-rendering="auto"/>
<ellipse cx="748.4" cy="606.4" rx="6.6" ry="3.9" fill="#00FF00" shape-rendering="auto"/>
<ellipse cx="748.4" cy="606.4" rx="3.3" ry="1.6" fill="#000" shape-rendering="auto"/>
<text x="0" y="0" transform="translate(508 481) rotate(28) skewX(-12)" font-family="Liberation Mono" font-size="6.8" fill="#A0A0A0" style="letter-spacing:0.25px">R8Z6P6 -- 8XRV1  CRU88</text>
<text x="0" y="0" transform="translate(594 497) rotate(28) skewX(-12)" font-family="Liberation Mono" font-size="6.8" fill="#A0A0A0" style="letter-spacing:0.25px">CE85P5X</text>
<text x="0" y="0" transform="translate(602 507) rotate(28) skewX(-12)" font-family="Liberation Mono" font-size="6.8" fill="#A0A0A0" style="letter-spacing:0.25px">SV-1</text>
<polygon points="825.0,258.0 850.0,248.0 1142.0,400.6 1116.0,413.5" fill="none" stroke="#6E6E6E" stroke-width="1"/>
<polygon points="825.0,281.0 853.0,268.0 1143.7,423.7 1117.0,434.8" fill="none" stroke="#6E6E6E" stroke-width="1"/>
<polyline points="825.0,258.0 825.0,281.0" fill="none" stroke="#6E6E6E" stroke-width="1"/>
<polyline points="850.0,248.0 853.0,268.0" fill="none" stroke="#6E6E6E" stroke-width="1"/>
<polyline points="1142.0,400.6 1143.7,423.7" fill="none" stroke="#6E6E6E" stroke-width="1"/>
<polyline points="1116.0,413.5 1117.0,434.8" fill="none" stroke="#6E6E6E" stroke-width="1"/>
<polyline points="868.0,265.7 1098.0,388.1" fill="none" stroke="#FF0000" stroke-width="1"/>
<polyline points="862.0,268.5 1100.0,395.1" fill="none" stroke="#FF0000" stroke-width="1"/>
<polyline points="850.0,267.1 1130.0,416.1" fill="none" stroke="#6E6E6E" stroke-width="1"/>
<polyline points="860.0,277.0 1135.0,423.3" fill="none" stroke="#6E6E6E" stroke-width="1"/>
<polyline points="840.0,280.0 953.0,340.1" fill="none" stroke="#FF00FF" stroke-width="1"/>
<polyline points="953.0,340.1 958.0,340.5 961.0,343.0 965.0,342.0 968.0,346.0 972.0,345.0" fill="none" stroke="#FF00FF" stroke-width="1"/>
<polyline points="968.0,346.0 976.0,341.9 1130.7,424.5" fill="none" stroke="#FF00FF" stroke-width="1"/>
<polyline points="972.0,345.0 975.0,349.0 978.0,352.5 1119.4,428.6" fill="none" stroke="#FF00FF" stroke-width="1"/>
<polygon points="849.4,236.3 854.9,233.1 867.8,240.0 862.3,242.7" fill="none" stroke="#FF0000" stroke-width="1"/>
<polyline points="849.4,236.3 851.2,262.5" fill="none" stroke="#FF0000" stroke-width="1"/>
<polyline points="855.4,233.1 855.4,259.7" fill="none" stroke="#FF0000" stroke-width="1"/>
<polyline points="862.3,242.7 863.2,267.5" fill="none" stroke="#FF0000" stroke-width="1"/>
<polyline points="867.8,240.0 867.8,265.7" fill="none" stroke="#FF0000" stroke-width="1"/>
<polygon points="851.2,262.5 855.4,259.7 867.8,265.7 863.2,267.5" fill="none" stroke="#FF0000" stroke-width="1"/>
<polyline points="850.5,237.5 862.0,243.5" fill="none" stroke="#FF0000" stroke-width="1"/>
<polyline points="855.0,263.0 858.0,261.5" fill="none" stroke="#FF0000" stroke-width="1"/>
<polyline points="857.0,264.0 860.0,262.5" fill="none" stroke="#FF0000" stroke-width="1"/>
<polyline points="859.0,265.0 862.0,263.5" fill="none" stroke="#FF0000" stroke-width="1"/>
<polyline points="861.0,266.0 864.0,264.5" fill="none" stroke="#FF0000" stroke-width="1"/>
<ellipse cx="843.5" cy="255.5" rx="4.0" ry="2.0" fill="none" stroke="#FF0000" stroke-width="1"/>
<polygon points="1097.4,368.0 1103.0,365.4 1116.0,371.9 1110.4,374.6" fill="none" stroke="#FF0000" stroke-width="1"/>
<polyline points="1097.4,368.0 1099.0,394.0" fill="none" stroke="#FF0000" stroke-width="1"/>
<polyline points="1103.0,365.4 1105.0,390.0" fill="none" stroke="#FF0000" stroke-width="1"/>
<polyline points="1116.0,371.9 1117.8,397.8" fill="none" stroke="#FF0000" stroke-width="1"/>
<polyline points="1110.4,374.6 1111.3,399.6" fill="none" stroke="#FF0000" stroke-width="1"/>
<polygon points="1099.0,394.0 1105.0,390.0 1117.8,397.8 1111.3,399.6" fill="none" stroke="#FF0000" stroke-width="1"/>
<ellipse cx="1123.3" cy="404.3" rx="4.0" ry="2.0" fill="none" stroke="#FF0000" stroke-width="1"/>
<ellipse cx="837.0" cy="278.0" rx="7.0" ry="3.8" fill="#00FF00" shape-rendering="auto"/>
<ellipse cx="837.0" cy="278.0" rx="3.5" ry="1.5" fill="#000" shape-rendering="auto"/>
<ellipse cx="864.0" cy="275.5" rx="7.0" ry="3.8" fill="#00FF00" shape-rendering="auto"/>
<ellipse cx="864.0" cy="275.5" rx="3.5" ry="1.5" fill="#000" shape-rendering="auto"/>
<ellipse cx="843.0" cy="289.0" rx="7.0" ry="3.8" fill="#00FF00" shape-rendering="auto"/>
<ellipse cx="843.0" cy="289.0" rx="3.5" ry="1.5" fill="#000" shape-rendering="auto"/>
<ellipse cx="947.6" cy="344.5" rx="7.0" ry="3.8" fill="#00FF00" shape-rendering="auto"/>
<ellipse cx="947.6" cy="344.5" rx="3.5" ry="1.5" fill="#000" shape-rendering="auto"/>
<ellipse cx="1022.4" cy="359.8" rx="7.0" ry="3.8" fill="#00FF00" shape-rendering="auto"/>
<ellipse cx="1022.4" cy="359.8" rx="3.5" ry="1.5" fill="#000" shape-rendering="auto"/>
<ellipse cx="1102.0" cy="427.0" rx="7.0" ry="3.8" fill="#00FF00" shape-rendering="auto"/>
<ellipse cx="1102.0" cy="427.0" rx="3.5" ry="1.5" fill="#000" shape-rendering="auto"/>
<ellipse cx="1122.4" cy="430.7" rx="7.0" ry="3.8" fill="#00FF00" shape-rendering="auto"/>
<ellipse cx="1122.4" cy="430.7" rx="3.5" ry="1.5" fill="#000" shape-rendering="auto"/>
<ellipse cx="1133.5" cy="426.0" rx="7.0" ry="3.8" fill="#00FF00" shape-rendering="auto"/>
<ellipse cx="1133.5" cy="426.0" rx="3.5" ry="1.5" fill="#000" shape-rendering="auto"/>
<ellipse cx="1130.7" cy="417.2" rx="7.0" ry="3.8" fill="#00FF00" shape-rendering="auto"/>
<ellipse cx="1130.7" cy="417.2" rx="3.5" ry="1.5" fill="#000" shape-rendering="auto"/>
<text x="0" y="0" transform="translate(868 257) rotate(28) skewX(-12)" font-family="Liberation Mono" font-size="6.8" fill="#A0A0A0" style="letter-spacing:0.25px">RSV-MM08S1 18S80 M1L-MR8A</text>
<ellipse cx="133.8" cy="214.5" rx="37.5" ry="17.5" fill="none" stroke="#FF0000" stroke-width="1"/>
<ellipse cx="133.5" cy="210.5" rx="35" ry="16.5" fill="none" stroke="#FF0000" stroke-width="1"/>
<ellipse cx="132.9" cy="202" rx="12" ry="5.5" fill="none" stroke="#FF0000" stroke-width="1"/>
<ellipse cx="133.8" cy="220" rx="21.3" ry="10.2" fill="none" stroke="#FF0000" stroke-width="1"/>
<ellipse cx="134.6" cy="230" rx="21.3" ry="10" fill="none" stroke="#FF0000" stroke-width="1"/>
<ellipse cx="134.6" cy="236" rx="21.3" ry="10" fill="none" stroke="#FF0000" stroke-width="1"/>
<ellipse cx="134.6" cy="247.2" rx="29.8" ry="15.3" fill="none" stroke="#FF0000" stroke-width="1"/>
<ellipse cx="136.3" cy="254" rx="45" ry="20.4" fill="none" stroke="#6E6E6E" stroke-width="1"/>
<ellipse cx="136.3" cy="268.5" rx="52.8" ry="24.7" fill="none" stroke="#6E6E6E" stroke-width="1"/>
<polyline points="134.0,266.5 138.5,270.5" fill="none" stroke="#6E6E6E" stroke-width="1"/>
<polyline points="134.0,270.5 138.5,266.5" fill="none" stroke="#6E6E6E" stroke-width="1"/>
<polygon points="222.9,303.5 255.1,289.5 294.6,310.2 262.4,323.6" fill="none" stroke="#6E6E6E" stroke-width="1"/>
<polygon points="223.5,331.5 256.9,316.9 296.4,337.5 263.0,352.1" fill="none" stroke="#6E6E6E" stroke-width="1"/>
<polyline points="222.9,303.5 223.5,331.5" fill="none" stroke="#6E6E6E" stroke-width="1"/>
<polyline points="255.1,289.5 256.9,316.9" fill="none" stroke="#6E6E6E" stroke-width="1"/>
<polyline points="294.6,310.2 296.4,337.5" fill="none" stroke="#6E6E6E" stroke-width="1"/>
<polyline points="262.4,323.6 263.0,352.1" fill="none" stroke="#6E6E6E" stroke-width="1"/>
<ellipse cx="255.5" cy="289.5" rx="11" ry="4.8" fill="none" stroke="#FF0000"/>
<ellipse cx="255.5" cy="306" rx="11" ry="4.8" fill="none" stroke="#FF0000"/>
<path d="M245 297 Q255.5 300 266 297" fill="none" stroke="#FF0000"/>
<polyline points="246.5,290.0 246.5,306.0" fill="none" stroke="#FF0000" stroke-width="1"/>
<polyline points="264.5,290.0 264.5,306.0" fill="none" stroke="#FF0000" stroke-width="1"/>
<polygon points="264.8,326.1 272.8,321.6 274.8,321.6 282.8,326.1 274.8,330.6 272.8,330.6" fill="#00FF00" stroke="#00FF00" stroke-width="1"/>
<polygon points="270.3,326.1 273.8,324.8 277.3,326.1 273.8,327.4" fill="#000" stroke="#000" stroke-width="1"/>
<polygon points="231.9,340.3 239.9,335.8 241.9,335.8 249.9,340.3 241.9,344.8 239.9,344.8" fill="#00FF00" stroke="#00FF00" stroke-width="1"/>
<polygon points="237.4,340.3 240.9,339.0 244.4,340.3 240.9,341.6" fill="#000" stroke="#000" stroke-width="1"/>
<ellipse cx="275.6" cy="353.4" rx="4.6" ry="2.9" fill="#00FF00" shape-rendering="auto"/>
<ellipse cx="275.6" cy="353.4" rx="2.3" ry="1.2" fill="#000" shape-rendering="auto"/>
<ellipse cx="283.5" cy="350.0" rx="4.6" ry="2.9" fill="#00FF00" shape-rendering="auto"/>
<ellipse cx="283.5" cy="350.0" rx="2.3" ry="1.2" fill="#000" shape-rendering="auto"/>
<ellipse cx="290.8" cy="346.9" rx="4.6" ry="2.9" fill="#00FF00" shape-rendering="auto"/>
<ellipse cx="290.8" cy="346.9" rx="2.3" ry="1.2" fill="#000" shape-rendering="auto"/>
<ellipse cx="298.8" cy="344.1" rx="4.6" ry="2.9" fill="#00FF00" shape-rendering="auto"/>
<ellipse cx="298.8" cy="344.1" rx="2.3" ry="1.2" fill="#000" shape-rendering="auto"/>
<polygon points="263.6,346.0 275.8,340.6 288.0,346.7 275.8,352.1" fill="none" stroke="#FF00FF" stroke-width="1"/>
<polyline points="235.0,333.0 258.0,322.0" fill="none" stroke="#6E6E6E" stroke-width="1"/>
<polyline points="240.0,330.0 262.0,320.0" fill="none" stroke="#6E6E6E" stroke-width="1"/>
<polyline points="243.0,336.0 250.0,333.0" fill="none" stroke="#6E6E6E" stroke-width="1"/>
<polyline points="254.0,333.0 259.0,336.0" fill="none" stroke="#6E6E6E" stroke-width="1"/>
<polygon points="313.2,343.9 349.3,327.5 393.5,350.0 357.5,366.4" fill="none" stroke="#6E6E6E" stroke-width="1"/>
<polygon points="313.9,380.7 352.0,363.0 394.9,387.5 358.1,403.8" fill="none" stroke="#6E6E6E" stroke-width="1"/>
<polyline points="313.2,343.9 313.9,380.7" fill="none" stroke="#6E6E6E" stroke-width="1"/>
<polyline points="349.3,327.5 352.0,363.0" fill="none" stroke="#6E6E6E" stroke-width="1"/>
<polyline points="393.5,350.0 394.9,387.5" fill="none" stroke="#6E6E6E" stroke-width="1"/>
<polyline points="357.5,366.4 358.1,403.8" fill="none" stroke="#6E6E6E" stroke-width="1"/>
<polyline points="313.2,343.1 349.0,327.2" fill="none" stroke="#FF0000" stroke-width="1"/>
<polyline points="349.0,327.2 360.6,332.8" fill="none" stroke="#FF0000" stroke-width="1"/>
<polyline points="360.6,332.8 370.2,328.4" fill="none" stroke="#FF0000" stroke-width="1"/>
<polyline points="370.2,328.4 387.7,336.7" fill="none" stroke="#FF0000" stroke-width="1"/>
<polyline points="387.7,336.7 393.3,349.5" fill="none" stroke="#FF0000" stroke-width="1"/>
<polyline points="393.3,349.5 393.7,355.5" fill="none" stroke="#FF0000" stroke-width="1"/>
<polyline points="393.7,355.5 355.8,366.2" fill="none" stroke="#FF0000" stroke-width="1"/>
<polyline points="313.2,343.1 355.8,366.2" fill="none" stroke="#FF0000" stroke-width="1"/>
<polyline points="313.2,343.1 313.2,354.7" fill="none" stroke="#FF0000" stroke-width="1"/>
<polyline points="313.2,354.7 324.7,359.5" fill="none" stroke="#FF0000" stroke-width="1"/>
<polyline points="324.7,349.5 324.7,359.5" fill="none" stroke="#FF0000" stroke-width="1"/>
<polyline points="324.7,349.5 331.9,352.7" fill="none" stroke="#FF0000" stroke-width="1"/>
<polyline points="331.9,352.7 360.6,339.9" fill="none" stroke="#FF0000" stroke-width="1"/>
<polyline points="331.9,352.7 335.5,343.9" fill="none" stroke="#FF0000" stroke-width="1"/>
<polyline points="335.5,343.9 349.4,337.1" fill="none" stroke="#FF0000" stroke-width="1"/>
<polyline points="352.6,353.9 387.7,336.7" fill="none" stroke="#FF0000" stroke-width="1"/>
<polyline points="352.6,353.9 355.8,366.2" fill="none" stroke="#FF0000" stroke-width="1"/>
<polyline points="360.6,332.8 360.6,343.5" fill="none" stroke="#FF0000" stroke-width="1"/>
<polyline points="370.2,328.4 369.4,336.0" fill="none" stroke="#FF0000" stroke-width="1"/>
<polyline points="369.4,336.0 393.3,349.5" fill="none" stroke="#FF0000" stroke-width="1"/>
<polyline points="360.6,339.9 393.7,355.5" fill="none" stroke="#FF0000" stroke-width="1"/>
<ellipse cx="340.7" cy="339.9" rx="6.0" ry="2.8" fill="none" stroke="#FF0000" stroke-width="1"/>
<polygon points="342.2,369.8 345.2,367.3 350.2,367.3 352.2,369.8 349.2,372.3 344.2,372.3" fill="#00FF00" stroke="#00FF00" stroke-width="1"/>
<polygon points="340.9,376.6 343.9,374.1 348.9,374.1 350.9,376.6 347.9,379.1 342.9,379.1" fill="#00FF00" stroke="#00FF00" stroke-width="1"/>
<polygon points="332.7,380.0 335.7,377.5 340.7,377.5 342.7,380.0 339.7,382.5 334.7,382.5" fill="#00FF00" stroke="#00FF00" stroke-width="1"/>
<polygon points="319.1,380.0 322.1,377.5 327.1,377.5 329.1,380.0 326.1,382.5 321.1,382.5" fill="#00FF00" stroke="#00FF00" stroke-width="1"/>
<polygon points="361.3,380.0 364.3,377.5 369.3,377.5 371.3,380.0 368.3,382.5 363.3,382.5" fill="#00FF00" stroke="#00FF00" stroke-width="1"/>
<polygon points="374.3,386.8 377.3,384.3 382.3,384.3 384.3,386.8 381.3,389.3 376.3,389.3" fill="#00FF00" stroke="#00FF00" stroke-width="1"/>
<polygon points="338.1,389.5 341.1,387.0 346.1,387.0 348.1,389.5 345.1,392.0 340.1,392.0" fill="#00FF00" stroke="#00FF00" stroke-width="1"/>
<polygon points="357.2,399.7 360.2,397.2 365.2,397.2 367.2,399.7 364.2,402.2 359.2,402.2" fill="#00FF00" stroke="#00FF00" stroke-width="1"/>
<ellipse cx="353.4" cy="373.2" rx="5.0" ry="3.0" fill="#00FF00" shape-rendering="auto"/>
<ellipse cx="353.4" cy="373.2" rx="2.5" ry="1.2" fill="#000" shape-rendering="auto"/>
<ellipse cx="330.9" cy="383.4" rx="5.0" ry="3.0" fill="#00FF00" shape-rendering="auto"/>
<ellipse cx="330.9" cy="383.4" rx="2.5" ry="1.2" fill="#000" shape-rendering="auto"/>
<ellipse cx="385.4" cy="390.2" rx="5.0" ry="3.0" fill="#00FF00" shape-rendering="auto"/>
<ellipse cx="385.4" cy="390.2" rx="2.5" ry="1.2" fill="#000" shape-rendering="auto"/>
<ellipse cx="356.1" cy="396.3" rx="5.0" ry="3.0" fill="#00FF00" shape-rendering="auto"/>
<ellipse cx="356.1" cy="396.3" rx="2.5" ry="1.2" fill="#000" shape-rendering="auto"/>
<polyline points="349.0,375.0 352.0,372.0" fill="none" stroke="#FF00FF" stroke-width="1"/>
<polyline points="334.0,382.0 341.0,379.0" fill="none" stroke="#FF00FF" stroke-width="1"/>
<polyline points="371.0,382.0 377.0,385.0" fill="none" stroke="#FF00FF" stroke-width="1"/>
<polyline points="346.0,391.0 353.0,395.0" fill="none" stroke="#FF00FF" stroke-width="1"/>
<polyline points="340.0,386.0 350.0,382.0" fill="none" stroke="#6E6E6E" stroke-width="1"/>
<polyline points="355.0,378.0 362.0,384.0" fill="none" stroke="#6E6E6E" stroke-width="1"/>
<polyline points="345.0,384.0 350.0,389.0" fill="none" stroke="#6E6E6E" stroke-width="1"/>
<polyline points="365.0,387.0 370.0,391.0" fill="none" stroke="#6E6E6E" stroke-width="1"/>
<polyline points="348.0,392.0 356.0,388.0" fill="none" stroke="#6E6E6E" stroke-width="1"/>
<polyline points="593.5,148.0 609.9,142.0" fill="none" stroke="#6E6E6E" stroke-width="1"/>
<polyline points="630.3,151.7 613.4,158.8" fill="none" stroke="#6E6E6E" stroke-width="1"/>
<polyline points="609.9,142.0 630.3,151.7" fill="none" stroke="#FF00FF" stroke-width="1.6"/>
<polyline points="593.5,148.0 613.4,158.8" fill="none" stroke="#FF00FF" stroke-width="1.6"/>
<polyline points="600.0,146.5 606.0,144.0 612.0,147.0" fill="none" stroke="#FF00FF" stroke-width="1.5"/>
<polyline points="604.0,154.0 609.0,152.0" fill="none" stroke="#FF00FF" stroke-width="1"/>
<ellipse cx="611.7" cy="150.3" rx="7.0" ry="3.0" fill="none" stroke="#FF0000" stroke-width="1"/>
<polyline points="606.0,150.0 616.0,150.0" fill="none" stroke="#20A0FF" stroke-width="1"/>
<polyline points="608.0,152.0 614.0,149.0" fill="none" stroke="#20A0FF" stroke-width="1"/>
<rect x="592.5" y="147.0" width="3" height="3" fill="#10A880"/>
<rect x="608.0" y="140.0" width="3" height="3" fill="#10A880"/>
<rect x="628.5" y="150.0" width="3" height="3" fill="#10A880"/>
<rect x="612.5" y="157.0" width="3" height="3" fill="#10A880"/>
<polygon points="639.0,139.0 653.7,133.0 665.0,139.0 650.3,145.7" fill="none" stroke="#FF0000" stroke-width="1"/>
<polyline points="646.0,136.0 657.0,142.5" fill="none" stroke="#FF0000" stroke-width="1"/>
<polyline points="645.0,141.5 660.0,136.0" fill="none" stroke="#FF0000" stroke-width="1"/>
<polyline points="639.0,139.0 639.7,172.3" fill="none" stroke="#6E6E6E" stroke-width="1"/>
<polyline points="650.3,145.7 651.7,179.0" fill="none" stroke="#6E6E6E" stroke-width="1"/>
<polyline points="665.0,139.0 667.7,172.3" fill="none" stroke="#6E6E6E" stroke-width="1"/>
<polyline points="645.5,137.0 647.0,170.0" fill="none" stroke="#6E6E6E" stroke-width="1"/>
<polyline points="658.0,142.0 659.0,170.0" fill="none" stroke="#6E6E6E" stroke-width="1"/>
<polygon points="639.7,172.3 653.7,167.0 667.7,172.3 651.7,179.0" fill="none" stroke="#6E6E6E" stroke-width="1"/>
<polygon points="644.0,171.0 648.0,169.5 649.0,172.0 645.0,173.0" fill="#FF00FF" stroke="#FF00FF" stroke-width="1"/>
<polygon points="652.0,168.0 656.0,167.0 656.0,170.0" fill="#FF00FF" stroke="#FF00FF" stroke-width="1"/>
<polygon points="656.0,172.0 660.0,171.0 660.0,174.0" fill="#FF00FF" stroke="#FF00FF" stroke-width="1"/>
<polygon points="648.0,175.0 651.0,173.0 652.0,176.0" fill="#FF00FF" stroke="#FF00FF" stroke-width="1"/>
<polyline points="645.0,172.0 660.0,176.0" fill="none" stroke="#10A880" stroke-width="1"/>
<polyline points="650.0,177.0 662.0,171.0" fill="none" stroke="#10A880" stroke-width="1"/>
<ellipse cx="700.3" cy="172.3" rx="5.8" ry="2.3" fill="none" stroke="#00FF00" stroke-width="1"/>
<ellipse cx="700.3" cy="183.7" rx="5.8" ry="2.3" fill="none" stroke="#00FF00" stroke-width="1"/>
<polyline points="695.7,172.0 695.7,184.0" fill="none" stroke="#FF0000" stroke-width="1"/>
<polyline points="705.0,172.0 705.0,184.0" fill="none" stroke="#FF0000" stroke-width="1"/>
<polyline points="696.3,184.0 697.0,200.0" fill="none" stroke="#6E6E6E" stroke-width="1"/>
<polyline points="705.7,184.0 706.0,199.0" fill="none" stroke="#6E6E6E" stroke-width="1"/>
<polygon points="693.0,203.0 695.0,200.5 701.0,200.5 703.0,203.0 700.0,205.5 695.0,205.5" fill="#00FF00" stroke="#00FF00" stroke-width="1"/>
<polygon points="701.0,200.0 703.0,197.5 708.0,197.5 709.5,200.0 707.0,202.5 702.0,202.5" fill="#00FF00" stroke="#00FF00" stroke-width="1"/>
<polygon points="697.0,202.0 701.0,200.5 703.0,204.0" fill="#FF00FF" stroke="#FF00FF" stroke-width="1"/>
<ellipse cx="751.6" cy="185.5" rx="9.2" ry="3.6" fill="none" stroke="#FF0000"/>
<polyline points="744.5,186.0 744.5,203.0" fill="none" stroke="#FF0000" stroke-width="1"/>
<polyline points="759.0,186.0 759.0,203.0" fill="none" stroke="#FF0000" stroke-width="1"/>
<path d="M744.5 191 Q751.6 194 759 191" fill="none" stroke="#FF0000"/>
<path d="M744.5 203 Q751.6 207 759 203 L761 199" fill="none" stroke="#FF0000"/>
<ellipse cx="751.9" cy="200.4" rx="14.5" ry="5" fill="none" stroke="#6E6E6E"/>
<ellipse cx="751.9" cy="209.2" rx="14.5" ry="5" fill="none" stroke="#6E6E6E"/>
<polyline points="753.5,207.0 753.5,221.0" fill="none" stroke="#6E6E6E" stroke-width="1"/>
<polygon points="732.3,217.0 753.5,210.3 773.7,218.0 753.0,224.7" fill="none" stroke="#6E6E6E" stroke-width="1"/>
<polygon points="732.3,228.9 753.5,222.0 773.7,229.4 752.5,238.2" fill="none" stroke="#6E6E6E" stroke-width="1"/>
<polyline points="732.3,217.0 732.3,228.9" fill="none" stroke="#6E6E6E" stroke-width="1"/>
<polyline points="753.5,210.3 753.5,222.0" fill="none" stroke="#6E6E6E" stroke-width="1"/>
<polyline points="773.7,218.0 773.7,229.4" fill="none" stroke="#6E6E6E" stroke-width="1"/>
<polyline points="753.0,224.7 752.5,238.2" fill="none" stroke="#6E6E6E" stroke-width="1"/>
<polygon points="754.0,230.0 757.0,229.5 758.0,232.0 755.0,232.5" fill="#FF00FF" stroke="#FF00FF" stroke-width="1"/>
<polyline points="740.0,230.0 766.0,226.0" fill="none" stroke="#FF00FF" stroke-width="1"/>
<polyline points="745.0,233.0 764.0,227.0" fill="none" stroke="#FF00FF" stroke-width="1"/>
<ellipse cx="752.5" cy="221.6" rx="5.0" ry="2.9" fill="#00FF00" shape-rendering="auto"/>
<ellipse cx="752.5" cy="221.6" rx="2.5" ry="1.2" fill="#000" shape-rendering="auto"/>
<ellipse cx="761.3" cy="225.3" rx="5.0" ry="2.9" fill="#00FF00" shape-rendering="auto"/>
<ellipse cx="761.3" cy="225.3" rx="2.5" ry="1.2" fill="#000" shape-rendering="auto"/>
<ellipse cx="738.5" cy="227.3" rx="5.0" ry="2.9" fill="#00FF00" shape-rendering="auto"/>
<ellipse cx="738.5" cy="227.3" rx="2.5" ry="1.2" fill="#000" shape-rendering="auto"/>
<ellipse cx="767.5" cy="229.9" rx="5.0" ry="2.9" fill="#00FF00" shape-rendering="auto"/>
<ellipse cx="767.5" cy="229.9" rx="2.5" ry="1.2" fill="#000" shape-rendering="auto"/>
<ellipse cx="744.7" cy="232.0" rx="5.0" ry="2.9" fill="#00FF00" shape-rendering="auto"/>
<ellipse cx="744.7" cy="232.0" rx="2.5" ry="1.2" fill="#000" shape-rendering="auto"/>
<ellipse cx="754.5" cy="236.1" rx="5.0" ry="2.9" fill="#00FF00" shape-rendering="auto"/>
<ellipse cx="754.5" cy="236.1" rx="2.5" ry="1.2" fill="#000" shape-rendering="auto"/>
<polygon points="744.0,224.0 749.0,222.5 750.0,226.0 745.0,227.0" fill="#6E6E6E" stroke="#6E6E6E" stroke-width="1"/>
<polygon points="487.0,646.0 490.0,643.0 491.0,648.0 488.0,649.0" fill="#10A880" stroke="#10A880" stroke-width="1"/>
<polygon points="485.7,648.0 501.7,640.0 529.7,653.3 513.3,666.3" fill="none" stroke="#6E6E6E" stroke-width="1"/>
<polyline points="489.7,646.0 517.4,663.0" fill="none" stroke="#6E6E6E" stroke-width="1"/>
<polyline points="493.7,644.0 521.5,659.8" fill="none" stroke="#6E6E6E" stroke-width="1"/>
<polyline points="497.7,642.0 525.6,656.5" fill="none" stroke="#6E6E6E" stroke-width="1"/>
<polygon points="502.0,641.0 505.0,640.5 510.0,643.0 527.0,652.0 529.0,654.0 525.0,655.0 506.0,645.0" fill="#10A880" stroke="#10A880" stroke-width="1"/>
<polygon points="490.0,648.0 494.0,648.0 508.0,655.0 511.0,659.0 507.0,659.0 491.0,650.0" fill="#10A880" stroke="#10A880" stroke-width="1"/>
<polyline points="499.0,645.0 505.0,648.0" fill="none" stroke="#6E6E6E" stroke-width="1"/>
<polyline points="509.0,650.0 515.0,653.0" fill="none" stroke="#6E6E6E" stroke-width="1"/>
<polyline points="814.3,451.1 838.7,464.4" fill="none" stroke="#FFFFFF" stroke-width="1"/>
<polyline points="846.5,464.1 871.7,454.4" fill="none" stroke="#FFFFFF" stroke-width="1"/>
<polyline points="814.3,478.5 837.6,468.1" fill="none" stroke="#FFFFFF" stroke-width="1"/>
<polyline points="846.5,468.5 869.8,480.4" fill="none" stroke="#FFFFFF" stroke-width="1"/>
<rect x="839.5" y="463.5" width="6" height="6" fill="none" stroke="#FFFFFF"/>
<ellipse cx="840.5" cy="466.5" rx="0.8" ry="0.8" fill="none" stroke="#FFFFFF" stroke-width="1"/>
<ellipse cx="844.0" cy="466.5" rx="0.8" ry="0.8" fill="none" stroke="#FFFFFF" stroke-width="1"/>
<polyline points="95.5,595.5 106.0,595.5 95.5,609.5 106.0,609.5" fill="none" stroke="#FFFFFF" stroke-width="1"/>
<polyline points="100.2,619.6 103.8,675.0" fill="none" stroke="#FFFFFF" stroke-width="1"/>
<polyline points="39.8,643.2 45.3,650.5 50.8,643.2" fill="none" stroke="#FFFFFF" stroke-width="1"/>
<polyline points="45.3,650.5 45.3,657.9" fill="none" stroke="#FFFFFF" stroke-width="1"/>
<polygon points="57.5,657.2 70.0,657.2 65.6,667.5" fill="none" stroke="#FFFFFF" stroke-width="1"/>
<ellipse cx="67.0" cy="661.5" rx="3.0" ry="5.0" fill="none" stroke="#FFFFFF" stroke-width="1"/>
<polyline points="70.0,664.5 92.0,675.0" fill="none" stroke="#FFFFFF" stroke-width="1"/>
<polyline points="169.4,643.9 179.7,657.9" fill="none" stroke="#FFFFFF" stroke-width="1"/>
<polyline points="179.7,643.9 169.4,657.9" fill="none" stroke="#FFFFFF" stroke-width="1"/>
<polygon points="145.8,657.2 159.8,657.2 149.5,667.5" fill="none" stroke="#FFFFFF" stroke-width="1"/>
<ellipse cx="148.0" cy="661.5" rx="3.0" ry="5.0" fill="none" stroke="#FFFFFF" stroke-width="1"/>
<polyline points="145.8,663.8 118.6,675.0" fill="none" stroke="#FFFFFF" stroke-width="1"/>
</g></svg>
</body></html>
